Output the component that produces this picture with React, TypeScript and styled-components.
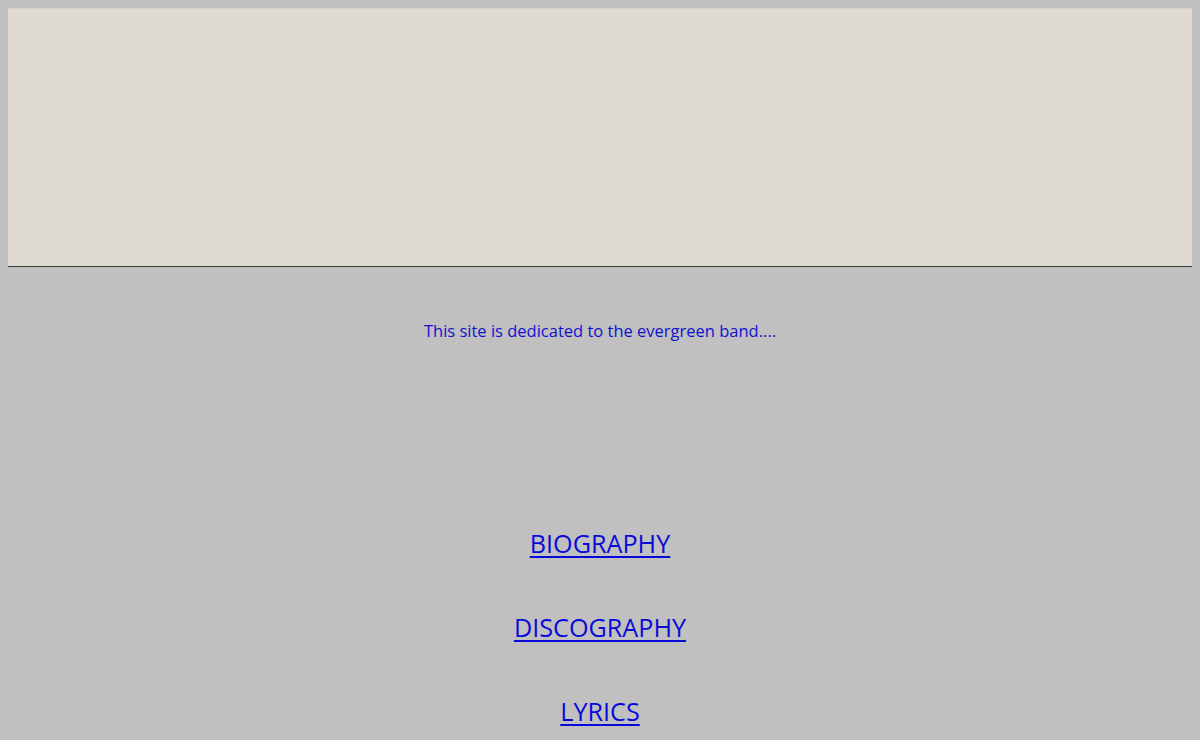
import React from "react";
import styled, { createGlobalStyle } from "styled-components";

const Global = createGlobalStyle`
  html, body { margin: 0; padding: 0; }
  body {
    background: #c0c0c0;
    padding: 8px;
    font-family: "Open Sans", "Noto Sans", sans-serif;
  }
`;

const Banner = styled.header`
  height: 257px;
  background: #dfdbd0;
  border-top: 1px solid #d8d4ca;
  border-bottom: 1px solid #3a3a3a;
`;

const Main = styled.main`
  display: flex;
  flex-direction: column;
  align-items: center;
`;

const Intro = styled.p`
  margin: 52px 0 0;
  font-size: 16.5px;
  line-height: 24px;
  color: #1010d0;
`;

const Nav = styled.nav`
  display: flex;
  flex-direction: column;
  align-items: center;
  gap: 50px;
  margin-top: 183px;
`;

const NavLink = styled.a`
  font-size: 25.2px;
  line-height: 34px;
  color: #0a0ad8;
  text-decoration: underline;
  text-underline-offset: 3px;
`;

export default function App() {
  return (
    <>
      <Global />
      <Banner />
      <Main>
        <Intro>This site is dedicated to the evergreen band....</Intro>
        <Nav>
          <NavLink href="#">BIOGRAPHY</NavLink>
          <NavLink href="#">DISCOGRAPHY</NavLink>
          <NavLink href="#">LYRICS</NavLink>
        </Nav>
      </Main>
    </>
  );
}
